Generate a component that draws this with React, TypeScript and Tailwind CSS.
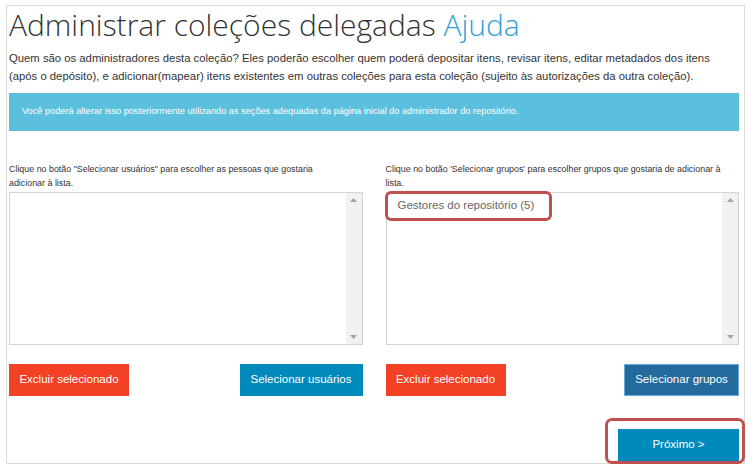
import React from "react";

function ListBox({ children }: { children?: React.ReactNode }) {
  return (
    <div className="relative flex h-[153px] border border-[#d5d5d5] bg-white">
      <div className="flex-1">{children}</div>
      <div className="flex w-[16px] flex-col items-center justify-between bg-[#f1f1f1] py-[5px]">
        <svg width="7" height="4" viewBox="0 0 7 4"><path d="M3.5 0 L7 4 L0 4 Z" fill="#a3a3a3" /></svg>
        <svg width="7" height="4" viewBox="0 0 7 4"><path d="M0 0 L7 0 L3.5 4 Z" fill="#a3a3a3" /></svg>
      </div>
    </div>
  );
}

export default function App() {
  return (
    <div className="relative h-[470px] w-[752px] overflow-hidden bg-white font-['Liberation_Sans',Arial,sans-serif]">
      <div className="ml-[6px] mt-[5px] h-[459px] w-[739px] border border-[#dcdcdc] pl-[2px] pr-[5px]">
        <h1 className="font-['Open_Sans',sans-serif] text-[30px] font-light leading-[38px] text-[#333]">
          Administrar coleções delegadas <span className="text-[#2aa3d8]">Ajuda</span>
        </h1>
        <p className="mt-[5px] text-[11.3px] leading-[18px] text-[#333]">
          Quem são os administradores desta coleção? Eles poderão escolher quem poderá depositar itens, revisar itens, editar metadados dos itens (após o depósito), e adicionar(mapear) itens existentes em outras coleções para esta coleção (sujeito às autorizações da outra coleção).
        </p>
        <div className="mt-[8px] flex h-[38px] items-center bg-[#5bc0de] px-[13px] text-[9.2px] text-white">
          Você poderá alterar isso posteriormente utilizando as seções adequadas da página inicial do administrador do repositório.
        </div>

        <div className="mt-[31px] grid grid-cols-2 gap-x-[23px]">
          <div>
            <p className="h-[30px] max-w-[320px] text-[8.9px] leading-[14px] text-[#333]">
              Clique no botão "Selecionar usuários" para escolher as pessoas que gostaria adicionar à lista.
            </p>
            <ListBox />
            <div className="mt-[19px] flex justify-between">
              <button className="h-[32px] w-[120px] bg-[#f24125] text-[11.5px] text-white">Excluir selecionado</button>
              <button className="h-[32px] w-[123px] bg-[#0089bb] text-[11.5px] text-white">Selecionar usuários</button>
            </div>
          </div>
          <div>
            <p className="h-[30px] text-[8.9px] leading-[14px] text-[#333]">
              Clique no botão 'Selecionar grupos' para escolher grupos que gostaria de adicionar à lista.
            </p>
            <ListBox>
              <div className="absolute left-[-2px] top-[-2px] flex h-[30px] w-[167px] items-center whitespace-nowrap rounded-[6px] border-[3px] border-[#c0504d] pl-[10px] text-[11.5px] text-[#666]">
                Gestores do repositório (5)
              </div>
            </ListBox>
            <div className="mt-[19px] flex justify-between">
              <button className="h-[32px] w-[120px] bg-[#f24125] text-[11.5px] text-white">Excluir selecionado</button>
              <button className="h-[32px] w-[115px] border border-[#6fa8dc] bg-[#236b9c] text-[11.5px] text-white">Selecionar grupos</button>
            </div>
          </div>
        </div>

        <div className="mt-[33px] flex justify-end">
          <button className="h-[32px] w-[121px] bg-[#0089bb] text-[11.5px] text-white">Próximo &gt;</button>
        </div>
      </div>
      <div className="absolute left-[605px] top-[418px] h-[46px] w-[140px] rounded-[7px] border-[3px] border-[#c0504d]" />
    </div>
  );
}
